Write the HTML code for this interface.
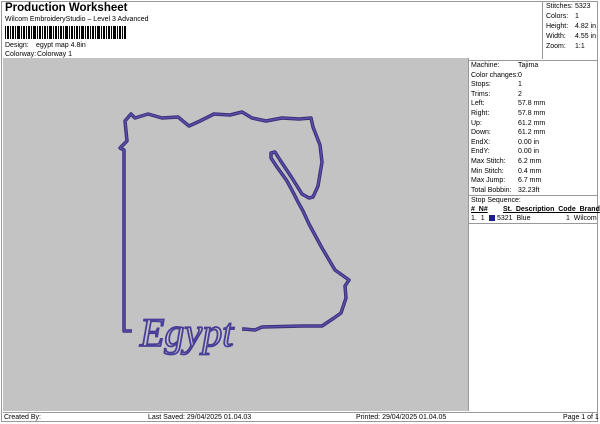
<!DOCTYPE html>
<html><head><style>
body{margin:0;width:600px;height:424px;background:#fff;font-family:"Liberation Sans",sans-serif;font-size:7px;color:#000;position:relative;overflow:hidden}
.a{position:absolute;white-space:nowrap}
</style></head><body>
<div class="a" style="left:1px;top:1px;width:597px;height:421px;border:1px solid #999;box-sizing:border-box"></div>
<div class="a" style="left:5px;top:2px;font-size:11.5px;font-weight:bold">Production Worksheet</div>
<div class="a" style="left:5px;top:16px">Wilcom EmbroideryStudio – Level 3 Advanced</div>
<svg class="a" style="left:5px;top:26px" width="122" height="13">
<g fill="#000">
<rect x="0" width="1" height="13"/><rect x="2" width="2" height="13"/><rect x="5" width="1" height="13"/><rect x="7" width="2" height="13"/><rect x="10" width="1" height="13"/><rect x="12" width="3" height="13"/><rect x="16" width="1" height="13"/><rect x="18" width="2" height="13"/><rect x="21" width="1" height="13"/><rect x="23" width="2" height="13"/><rect x="26" width="1" height="13"/><rect x="28" width="3" height="13"/><rect x="32" width="1" height="13"/><rect x="34" width="2" height="13"/><rect x="37" width="1" height="13"/><rect x="39" width="2" height="13"/><rect x="42" width="1" height="13"/><rect x="44" width="3" height="13"/><rect x="48" width="1" height="13"/><rect x="50" width="2" height="13"/><rect x="53" width="1" height="13"/><rect x="55" width="2" height="13"/><rect x="58" width="1" height="13"/><rect x="60" width="3" height="13"/><rect x="64" width="1" height="13"/><rect x="66" width="2" height="13"/><rect x="69" width="1" height="13"/><rect x="71" width="2" height="13"/><rect x="74" width="1" height="13"/><rect x="76" width="3" height="13"/><rect x="80" width="1" height="13"/><rect x="82" width="2" height="13"/><rect x="85" width="1" height="13"/><rect x="87" width="2" height="13"/><rect x="90" width="1" height="13"/><rect x="92" width="3" height="13"/><rect x="96" width="1" height="13"/><rect x="98" width="2" height="13"/><rect x="101" width="1" height="13"/><rect x="103" width="2" height="13"/><rect x="106" width="1" height="13"/><rect x="108" width="3" height="13"/><rect x="112" width="1" height="13"/><rect x="114" width="2" height="13"/><rect x="117" width="1" height="13"/><rect x="119" width="2" height="13"/>
</g></svg>
<div class="a" style="left:5px;top:42px">Design:</div><div class="a" style="left:36px;top:42px">egypt map 4.8in</div>
<div class="a" style="left:5px;top:51px">Colorway:</div><div class="a" style="left:37px;top:51px">Colorway 1</div>
<div class="a" style="left:3px;top:60px;width:595px;border-top:1px solid #999"></div>
<div class="a" style="left:542px;top:1px;height:58px;border-left:1px solid #999"></div>
<div class="a" style="left:546px;top:2px;line-height:10px">Stitches:<br>Colors:<br>Height:<br>Width:<br>Zoom:</div>
<div class="a" style="left:575px;top:2px;line-height:10px">5323<br>1<br>4.82 in<br>4.55 in<br>1:1</div>
<div class="a" style="left:3px;top:58px;width:465px;height:353px;background:#c3c3c3"></div>
<div class="a" style="left:468px;top:58px;height:353px;border-left:1px solid #999"></div>
<div class="a" style="left:471px;top:61px;line-height:9.6px">Machine:<br>Color changes:<br>Stops:<br>Trims:<br>Left:<br>Right:<br>Up:<br>Down:<br>EndX:<br>EndY:<br>Max Stitch:<br>Min Stitch:<br>Max Jump:<br>Total Bobbin:</div>
<div class="a" style="left:518px;top:61px;line-height:9.6px">Tajima<br>0<br>1<br>2<br>57.8 mm<br>57.8 mm<br>61.2 mm<br>61.2 mm<br>0.00 in<br>0.00 in<br>6.2 mm<br>0.4 mm<br>6.7 mm<br>32.23ft</div>
<div class="a" style="left:469px;top:195px;width:129px;border-top:1px solid #999"></div>
<div class="a" style="left:471px;top:197px">Stop Sequence:</div>
<div class="a" style="left:471px;top:206px;font-weight:bold;text-decoration:underline">#&nbsp;&nbsp;N#</div>
<div class="a" style="left:503px;top:206px;font-weight:bold;text-decoration:underline">St.&nbsp;&nbsp;Description&nbsp;&nbsp;Code&nbsp;&nbsp;Brand</div>
<div class="a" style="left:471px;top:215px">1.&nbsp;&nbsp;1</div>
<div class="a" style="left:489px;top:215px;width:6px;height:6px;background:#1c1c8c"></div>
<div class="a" style="left:497px;top:215px">5321&nbsp;&nbsp;Blue</div>
<div class="a" style="left:566px;top:215px">1&nbsp;&nbsp;Wilcom</div>
<div class="a" style="left:469px;top:223px;width:129px;border-top:1px solid #999"></div>
<svg class="a" style="left:0;top:0" width="600" height="424">
<g fill="none" stroke-linejoin="round">
<path id="p" d="M125,121 L131,114 L135,118 L148,114 L162,118 L178,117 L189,126 L200,121 L214,114 L230,115 L242,112 L252,118 L266,121 L282,118 L299,119 L311,118 L313,127 L320,145 L322,162 L318,186 L313,197 L309,198 L302,194 L292,178 L280,160 L275,152 L271,153 L271,158 L277,167 L287,181 L294,194 L298,202 L303,211 L309,224 L322,248 L335,270 L349,280 L345,286 L346,298 L341,313 L334,318 L322,326 L302,326 L262,327 L255,330 L244,329 L135,331 L124,331 L124,150 L120,148 L127,141 Z" stroke="#3a2f7a" stroke-width="3.5"/>
<path d="M125,121 L131,114 L135,118 L148,114 L162,118 L178,117 L189,126 L200,121 L214,114 L230,115 L242,112 L252,118 L266,121 L282,118 L299,119 L311,118 L313,127 L320,145 L322,162 L318,186 L313,197 L309,198 L302,194 L292,178 L280,160 L275,152 L271,153 L271,158 L277,167 L287,181 L294,194 L298,202 L303,211 L309,224 L322,248 L335,270 L349,280 L345,286 L346,298 L341,313 L334,318 L322,326 L302,326 L262,327 L255,330 L244,329 L135,331 L124,331 L124,150 L120,148 L127,141 Z" stroke="#5a4fa8" stroke-width="1.5"/>
</g>
<rect x="132" y="314" width="110" height="24" fill="#c3c3c3"/>
<text x="140" y="346" font-family="Liberation Serif,serif" font-style="italic" font-size="40" fill="none" stroke="#4a3f98" stroke-width="1.8">Egypt</text>
</svg>
<div class="a" style="left:3px;top:412px;width:595px;border-top:1px solid #999"></div>
<div class="a" style="left:4px;top:414px">Created By:</div>
<div class="a" style="left:148px;top:414px">Last Saved: 29/04/2025 01.04.03</div>
<div class="a" style="left:356px;top:414px">Printed: 29/04/2025 01.04.05</div>
<div class="a" style="left:563px;top:414px">Page 1 of 1</div>
</body></html>
